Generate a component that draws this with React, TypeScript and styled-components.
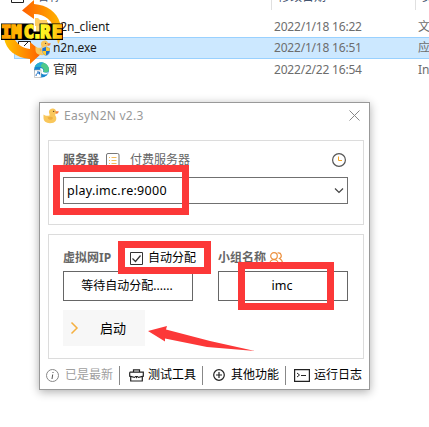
import React from "react";
import styled, { createGlobalStyle } from "styled-components";

const Global = createGlobalStyle`
  * { box-sizing: border-box; }
  body { margin: 0; background: #fff; overflow: hidden; font: 12px/16px "Noto Sans", "Noto Sans CJK SC", sans-serif; color: #000; }
  svg { display: block; overflow: visible; flex: none; }
`;
const Page = styled.main`position: relative; width: 429px; height: 427px; overflow: hidden; background: #fff;`;
const Files = styled.div`display: flex; flex-direction: column;`;
const HeaderRow = styled.div`display: flex; height: 16px; padding-left: 17px;`;
const HeadCell = styled.div<{ $w: number; $pad: number }>`
  width: ${p => p.$w}px; height: 10px; padding-left: ${p => p.$pad}px; border-right: 1px solid #e0e0e0;
  color: #44546f; line-height: 17px; overflow: hidden; white-space: nowrap; flex: none;
  span { display: block; margin-top: -12px; }
`;
const FileRow = styled.div<{ $on?: boolean }>`
  display: flex; align-items: center; height: ${p => (p.$on ? 22 : 21)}px; margin-left: 14px; padding-left: 18px;
  border: 1px solid ${p => (p.$on ? "#99d1ff" : "transparent")}; border-right: 0;
  background: ${p => (p.$on ? "#cce8ff" : "transparent")}; white-space: nowrap;
`;
const Name = styled.span`width: 225px; padding-left: 4px; color: #1a1a1a; letter-spacing: -0.1px; flex: none;`;
const Stamp = styled.span`width: 144px; color: #6d6d6d; letter-spacing: -0.2px; flex: none;`;
const Kind = styled.span`color: #6d6d6d;`;
const Logo = styled.div`position: absolute; left: 0; top: 0;`;
const RowDuck = styled.div`position: relative; z-index: 2; margin-left: 2px; margin-right: -2px;`;
const Dialog = styled.section`
  position: absolute; left: 39px; top: 102px; width: 331px; height: 288px; background: #fff;
  border: 1px solid #999; box-shadow: 0 2px 9px rgba(0,0,0,.32); padding: 0 5px 0 8px;
`;
const TitleBar = styled.header`
  display: flex; align-items: center; height: 25px; margin-left: -5px; padding-right: 4px; color: #999;
  span { flex: 1; margin-left: 5px; letter-spacing: 0.25px; }
`;
const Group = styled.div<{ $h: number }>`
  height: ${p => p.$h}px; width: 316px; border: 1px solid #dcdcdc; padding: 0 14px; display: flex; flex-direction: column;
`;
const GroupOne = styled(Group)`margin-top: 12px; padding-top: 10px;`;
const GroupTwo = styled(Group)`margin-top: 9px; padding-top: 14px;`;
const Labels = styled.div`display: flex; align-items: center; height: 18px; color: #666; white-space: nowrap;`;
const Label = styled.span<{ $w: number; $bold?: boolean; $pad?: number }>`
  width: ${p => p.$w}px; padding-left: ${p => p.$pad ?? 0}px; font-weight: ${p => (p.$bold ? 700 : 400)}; flex: none;
`;
const Combo = styled.div`
  margin-top: 8px; height: 27px; width: 285px; border: 1px solid #707070; padding: 0 4px 0 3px;
  display: flex; align-items: center; justify-content: space-between; color: #000; font-size: 12.5px; letter-spacing: 0.28px;
`;
const Boxes = styled.div`display: flex; gap: 25px; margin-top: 4px;`;
const Field = styled.div<{ $wide?: boolean }>`
  width: 130px; height: 30px; border: 1px solid #666; display: flex; align-items: center; justify-content: center;
  padding-right: 2px; font-size: ${p => (p.$wide ? 12.5 : 12)}px;
`;
const Check = styled.label`display: flex; align-items: center; gap: 5px; width: 88px; color: #000;`;
const Start = styled.button`
  display: flex; align-items: center; gap: 22px; width: 82px; height: 36px; margin: 9px 0 0; padding: 0 0 1px 8px;
  border: 0; background: #f7f7f7; font: 13px "Noto Sans CJK SC", sans-serif; color: #000;
`;
const Footer = styled.footer`display: flex; align-items: center; height: 30px; margin: 1px 0 0 -3px; white-space: nowrap;`;
const Tool = styled.div<{ $w: number; $gap: number; $pad: number; $muted?: boolean; $last?: boolean }>`
  display: flex; align-items: center; width: ${p => p.$w}px; height: 19px; gap: ${p => p.$gap}px; padding-left: ${p => p.$pad}px;
  border-right: ${p => (p.$last ? 0 : 1)}px solid #888; color: ${p => (p.$muted ? "#a0a0a0" : "#000")}; flex: none;
`;
const Mark = styled.div<{ $x: number; $y: number; $w: number; $h: number }>`
  position: absolute; left: ${p => p.$x}px; top: ${p => p.$y}px; width: ${p => p.$w}px; height: ${p => p.$h}px; border: 7px solid #fc3838;
`;
const Arrow = styled.svg`position: absolute; left: 148px; top: 325px;`;

const Duck = ({ shield }: { shield?: boolean }) => (
  <svg width="16" height="16" viewBox="0 0 16 16">
    <path d="M.5 6.500C2 8 4.500 8 6.500 7.500 7 6 5.500 5 6 3.200 6.600.8 9 0 11 .7c1.600.6 2.300 2 2 3.500-.2 1.500-1.200 2.300-.6 3.500 1.200 1.500 1.300 4 0 5.500-1 1.300-2.500 2-5.400 2C3 15.200.5 13 .5 10z" fill="#f9c75b" />
    <path d="M12.500 3.300h3.300l-.8 2-2.300.8z" fill="#f0823c" />
    <path d="M4.500 9.500c2-1 4.500-.8 5.500.4-1 2.400-4.500 2.700-5.500-.4" fill="#eeb040" />
    <circle cx="10.600" cy="3.400" r=".7" fill="#6b4b2a" />
    {shield && <g><path d="M7 8l4-1.500L15 8v3.500c0 2-2 3.500-4 4.500-2-1-4-2.500-4-4.500z" fill="#1e6fc8" stroke="#e8eef5" strokeWidth=".5" /><path d="M11 6.800V11h3.700V8.200zM11 11v4.600c-2-1-3.600-2.300-3.700-4.600z" fill="#fbc934" /></g>}
  </svg>
);

export default function App() {
  return (
    <Page>
      <Global />
      <Files>
        <HeaderRow>
          <HeadCell $w={255} $pad={20}><span>名称</span></HeadCell>
          <HeadCell $w={144} $pad={6}><span>修改日期</span></HeadCell>
          <HeadCell $w={40} $pad={6}><span>类型</span></HeadCell>
        </HeaderRow>
        <FileRow>
          <svg width="16" height="16" viewBox="0 0 16 16"><path d="M3 1h5l1 2h6v12H3z" fill="#ffd875" /></svg>
          <Name>n2n_client</Name><Stamp>2022/1/18 16:22</Stamp><Kind>文件夹</Kind>
        </FileRow>
        <FileRow $on>
          <RowDuck><Duck shield /></RowDuck><Name>n2n.exe</Name><Stamp>2022/1/18 16:51</Stamp><Kind>应用</Kind>
        </FileRow>
        <FileRow>
          <svg width="16" height="16" viewBox="0 0 16 16">
            <circle cx="8.500" cy="8" r="7.500" fill="#1585cf" />
            <path d="M1.500 5.500C4-1 13-1.500 16 6c.6 4-3 5.500-6 4 1.500-1.500 1-4-2-5C5.500 4.200 3 4.500 1.500 5.500" fill="#4fc98a" />
            <path d="M1.500 5.500C3.500.5 8-.5 11 1 8 1.500 8 4 8 5c-2.500-.8-5-.5-6.500.5" fill="#28acd8" />
            <path d="M7 6.500c2-1 4 .5 3 3.500 2 1 4 1 6 0-2 3-5 3.500-8 1" fill="#fff" />
            <path d="M1.500 8h6.500v7.500H1.500z" fill="#fff" stroke="#aaa" strokeWidth=".6" />
            <path d="M3 14c0-2 1-3 3-3M4 10h2.500v2.500" stroke="#176bc0" fill="none" />
          </svg>
          <Name>官网</Name><Stamp>2022/2/22 16:54</Stamp><Kind>Internet</Kind>
        </FileRow>
      </Files>
      <Logo>
        <svg width="66" height="66" viewBox="0 0 66 66">
          <defs>
            <linearGradient id="up" gradientUnits="userSpaceOnUse" x1="22" y1="0" x2="60" y2="0"><stop offset="0" stopColor="#ff5f00" /><stop offset="1" stopColor="#ffb400" /></linearGradient>
            <linearGradient id="down" gradientUnits="userSpaceOnUse" x1="4" y1="0" x2="43" y2="0"><stop offset="0" stopColor="#ffc400" /><stop offset="1" stopColor="#ff5a00" /></linearGradient>
            <linearGradient id="word" gradientUnits="userSpaceOnUse" x1="0" y1="0" x2="64" y2="0"><stop offset="0" stopColor="#ff9500" /><stop offset=".3" stopColor="#ffb800" /><stop offset=".55" stopColor="#ffff28" /><stop offset=".75" stopColor="#ffee20" /><stop offset="1" stopColor="#ffa800" /></linearGradient>
          </defs>
          <path d="M11.500-9.500h12v12h-12zM18.500 41.500h12v12h-12z" fill="#fff" stroke="#222" />
          <path d="M22 10.500L34 0v4c13 1 23 8 26 19l1 8h-6c-2-10-10-17-21-17v5z" fill="url(#up)" />
          <path d="M60 39c0 2-1 4-2 5l-1-5z" fill="#ffba30" />
          <path d="M4 38h10c3 6 8 10 16 11v-7l12.500 10.500L30 64v-5C16 58 6 50 4 38" fill="url(#down)" />
          <path d="M24 46l4-4" fill="none" stroke="#222" />
          <path d="M35 18h3l2 2h7v6H35z" fill="#ffce62" />
          <path d="M1 23.500h32.500v8h6v-8H63v16.500H1z" fill="#000" />
          <text x="1 11.200 23.800 32.200 40.300 52" y="38" fontFamily="DejaVu Sans Mono" fontWeight="700" fontSize="17" fill="url(#word)" stroke="url(#word)" strokeWidth="1.700" strokeLinejoin="miter">IMC.RE</text>
        </svg>
      </Logo>
      <Dialog>
        <TitleBar>
          <Duck /><span>EasyN2N v2.3</span>
          <svg width="11" height="11" viewBox="0 0 11 11"><path d="M.5.5l10 10M10.500.5l-10 10" stroke="#888" /></svg>
        </TitleBar>
        <GroupOne $h={85}>
          <Labels>
            <Label $w={43} $bold>服务器</Label>
            <svg width="14" height="14" viewBox="0 0 14 14"><rect x=".5" y=".5" width="12.500" height="13" rx="1.500" fill="#fff" stroke="#777" /><path d="M3 4.500h1M5.500 4.500h5M3 7.500h1M5.500 7.500h5M3 10.500h1M5.500 10.500h5" stroke="#f4bd5c" /></svg>
            <Label $w={212} $pad={10}>付费服务器</Label>
            <svg width="14" height="14" viewBox="0 0 14 14"><circle cx="7" cy="7" r="6.400" fill="none" stroke="#555" strokeWidth="1.200" /><path d="M6.500 3.500v4H10" fill="none" stroke="#f5a623" /></svg>
          </Labels>
          <Combo><span>play.imc.re:9000</span><svg width="8" height="5" viewBox="0 0 8 5"><path d="M0 .5l4 4 4-4" fill="none" stroke="#444" strokeWidth="1.200" /></svg></Combo>
        </GroupOne>
        <GroupTwo $h={125}>
          <Labels>
            <Label $w={67} $bold>虚拟网IP</Label>
            <Check><svg width="13" height="13" viewBox="0 0 13 13"><path d="M.5.5h12v12H.5z" fill="none" stroke="#333" /><path d="M2.500 6.500l3 3 5-6" fill="none" stroke="#333" strokeWidth="1.200" /></svg>自动分配</Check>
            <Label $w={51} $bold>小组名称</Label>
            <svg width="14" height="13" viewBox="0 0 14 13"><g fill="none" stroke="#ec9140" strokeWidth="1.200"><circle cx="5" cy="4" r="3.300" /><path d="M.5 12.500c0-6.500 9-6.500 9 0M8.500 1c4-1 5 4 2 5.500 2 1 3 3 3 5h-2" /></g></svg>
          </Labels>
          <Boxes><Field>等待自动分配......</Field><Field $wide>imc</Field></Boxes>
          <Start><svg width="7" height="12" viewBox="0 0 7 12"><path d="M.5.5L6 6 .5 11.500" fill="none" stroke="#f5b040" strokeWidth="1.500" /></svg>启动</Start>
        </GroupTwo>
        <Footer>
          <Tool $w={75} $pad={1} $gap={6} $muted><svg width="13" height="13" viewBox="0 0 13 13"><circle cx="6.500" cy="6.500" r="6" fill="none" stroke="#888" /><path d="M7 3v1M6.700 5.500L6 10" stroke="#555" /></svg>已是最新</Tool>
          <Tool $w={83} $pad={9} $gap={4}><svg width="15" height="13" viewBox="0 0 15 13"><path d="M4.500 3V.8h6V3M.7 3.200h13.600v4L9 8.500M6 8.500L.7 7.200v-4M1.700 8v4h11.600V8" fill="none" stroke="#222" strokeWidth="1.200" /><path d="M5.500 7h4L7.500 9.500z" fill="#222" /></svg>测试工具</Tool>
          <Tool $w={83} $pad={10} $gap={6}><svg width="12" height="12" viewBox="0 0 12 12"><circle cx="6" cy="6" r="5.300" fill="none" stroke="#222" strokeWidth="1.200" /><path d="M3 6h6M6 3v6" stroke="#222" strokeWidth="1.200" /></svg>其他功能</Tool>
          <Tool $w={83} $pad={8} $gap={4} $last><svg width="16" height="13" viewBox="0 0 16 13"><path d="M.6.6h14.800v11.800H.6z" fill="none" stroke="#222" strokeWidth="1.200" /><path d="M3 4l2.500 2L3 8M7 6.500h5" fill="none" stroke="#222" /></svg>运行日志</Tool>
        </Footer>
      </Dialog>
      <Mark $x={53} $y={165} $w={136} $h={50} />
      <Mark $x={118} $y={241} $w={93} $h={33} />
      <Mark $x={238} $y={262} $w={96} $h={48} />
      <Arrow width="108" height="28" viewBox="0 0 108 28"><path d="M0 6L19 1l-1 3.500 44 11.500 45 10-48-4-42-8.500v3z" fill="#fc3838" /></Arrow>
    </Page>
  );
}
